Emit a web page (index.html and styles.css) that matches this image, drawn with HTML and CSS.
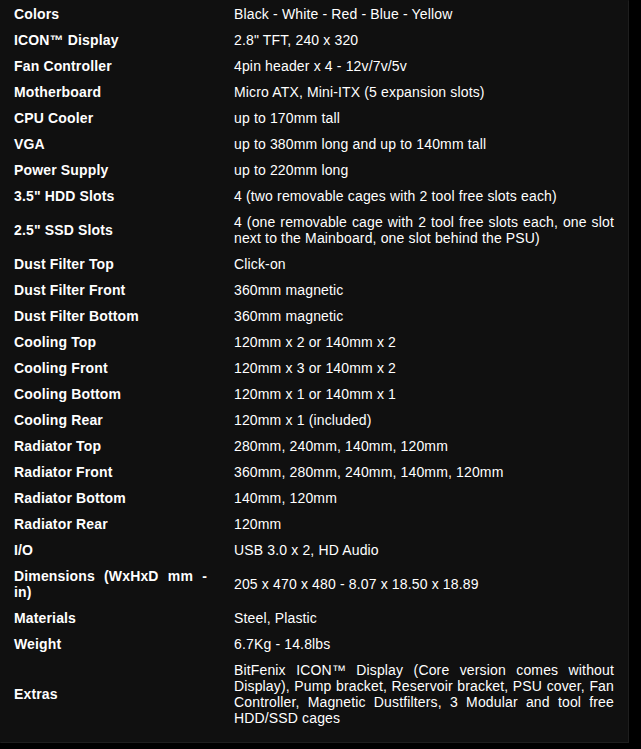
FILE: index.html
```html
<!DOCTYPE html>
<html>
<head>
<meta charset="utf-8">
<link rel="stylesheet" href="styles.css">
</head>
<body>
<div class="specs">
<table class="spec-table">
<colgroup><col class="col-label"><col class="col-value"></colgroup>
<tbody>
<tr><th>Colors</th><td>Black - White - Red - Blue - Yellow</td></tr>
<tr><th>ICON™ Display</th><td>2.8" TFT, 240 x 320</td></tr>
<tr><th>Fan Controller</th><td>4pin header x 4 - 12v/7v/5v</td></tr>
<tr><th>Motherboard</th><td>Micro ATX, Mini-ITX (5 expansion slots)</td></tr>
<tr><th>CPU Cooler</th><td>up to 170mm tall</td></tr>
<tr><th>VGA</th><td>up to 380mm long and up to 140mm tall</td></tr>
<tr><th>Power Supply</th><td>up to 220mm long</td></tr>
<tr><th>3.5" HDD Slots</th><td>4 (two removable cages with 2 tool free slots each)</td></tr>
<tr><th>2.5" SSD Slots</th><td>4 (one removable cage with 2 tool free slots each, one slot next to the Mainboard, one slot behind the PSU)</td></tr>
<tr><th>Dust Filter Top</th><td>Click-on</td></tr>
<tr><th>Dust Filter Front</th><td>360mm magnetic</td></tr>
<tr><th>Dust Filter Bottom</th><td>360mm magnetic</td></tr>
<tr><th>Cooling Top</th><td>120mm x 2 or 140mm x 2</td></tr>
<tr><th>Cooling Front</th><td>120mm x 3 or 140mm x 2</td></tr>
<tr><th>Cooling Bottom</th><td>120mm x 1 or 140mm x 1</td></tr>
<tr><th>Cooling Rear</th><td>120mm x 1 (included)</td></tr>
<tr><th>Radiator Top</th><td>280mm, 240mm, 140mm, 120mm</td></tr>
<tr><th>Radiator Front</th><td>360mm, 280mm, 240mm, 140mm, 120mm</td></tr>
<tr><th>Radiator Bottom</th><td>140mm, 120mm</td></tr>
<tr><th>Radiator Rear</th><td>120mm</td></tr>
<tr><th>I/O</th><td>USB 3.0 x 2, HD Audio</td></tr>
<tr><th>Dimensions (WxHxD mm - in)</th><td>205 x 470 x 480 - 8.07 x 18.50 x 18.89</td></tr>
<tr><th>Materials</th><td>Steel, Plastic</td></tr>
<tr><th>Weight</th><td>6.7Kg - 14.8lbs</td></tr>
<tr><th>Extras</th><td>BitFenix ICON™ Display (Core version comes without Display), Pump bracket, Reservoir bracket, PSU cover, Fan Controller, Magnetic Dustfilters, 3 Modular and tool free HDD/SSD cages</td></tr>
</tbody>
</table>
</div>
</body>
</html>
```

FILE: styles.css
```css
html, body {
  margin: 0;
  padding: 0;
  background: #000;
}

.specs {
  box-sizing: border-box;
  width: 629px;
  height: 743px;
  background: #101010;
  border: 1px solid #1e1e1e;
  border-top-color: #101010;
  border-left-color: #101010;
  padding-bottom: 11px;
}

.spec-table {
  width: 627px;
  border-collapse: collapse;
  table-layout: fixed;
  font-family: "Liberation Sans", Arial, sans-serif;
  font-size: 14px;
  line-height: 16px;
  letter-spacing: 0.15px;
  color: #fff;
}

.col-label {
  width: 219px;
}

.spec-table th,
.spec-table td {
  padding: 5px 14px;
  text-align: justify;
  vertical-align: middle;
}

.spec-table th {
  font-weight: bold;
  padding-left: 13px;
  padding-right: 13px;
}
```
